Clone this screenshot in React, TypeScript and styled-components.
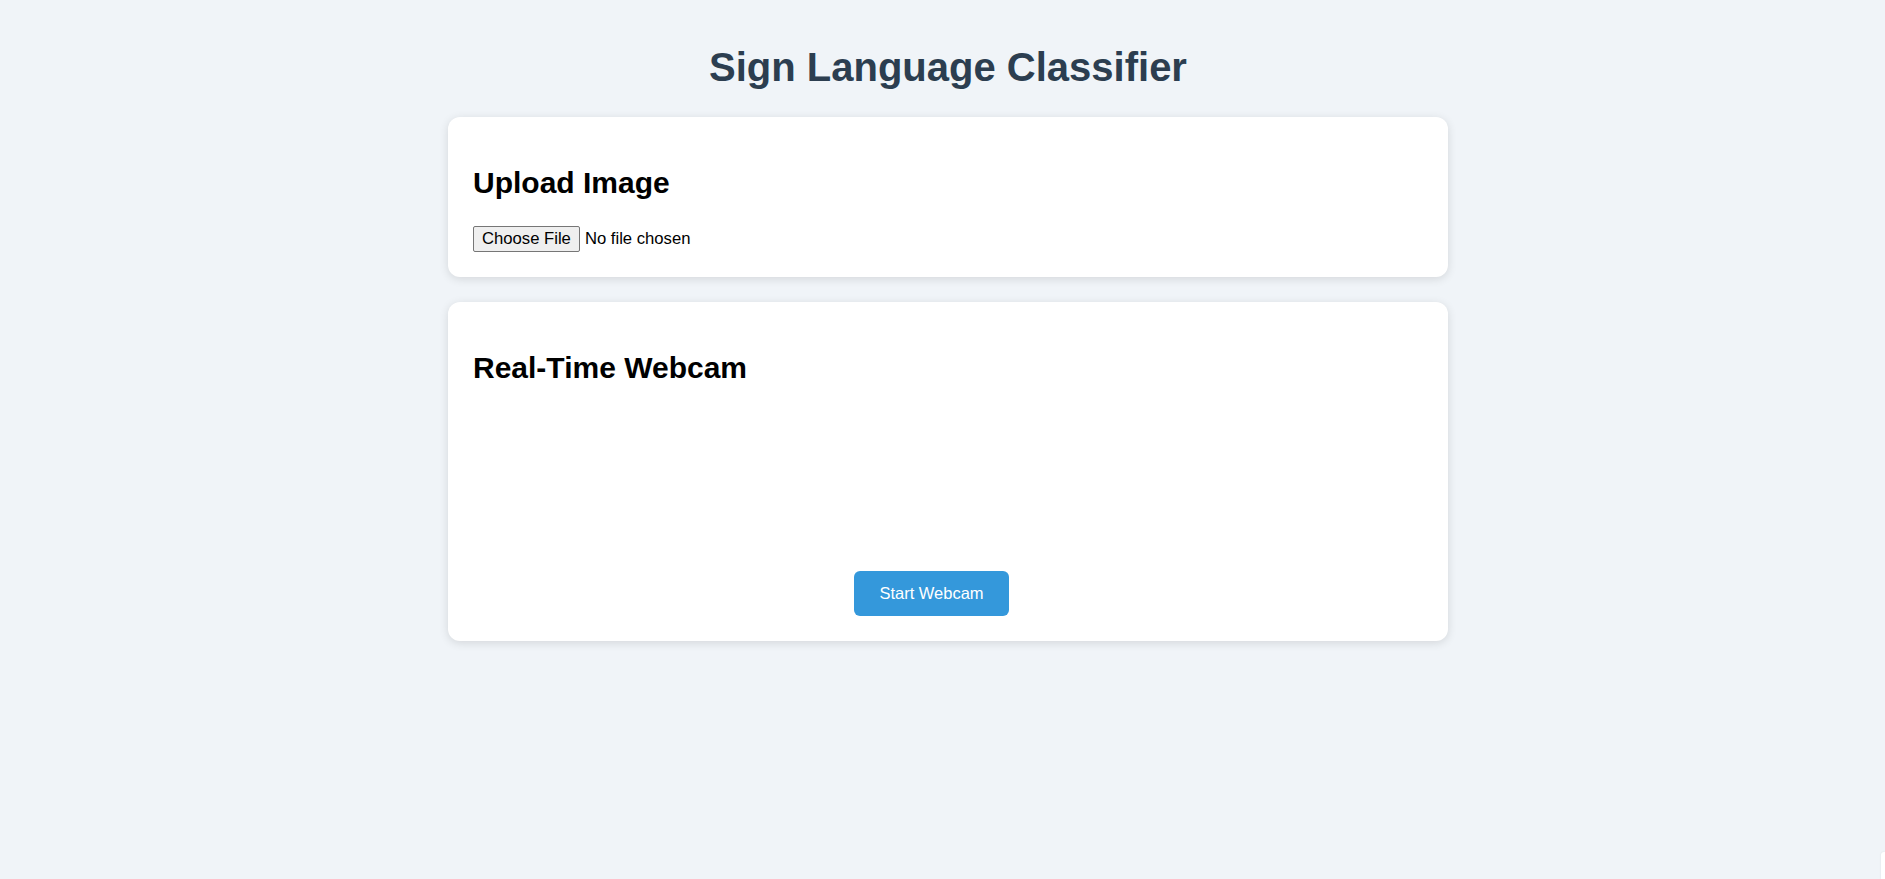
import React from 'react'
import styled, { createGlobalStyle } from 'styled-components'

const GlobalStyle = createGlobalStyle`
  html, body {
    margin: 0;
    padding: 0;
    background: #f0f4f8;
    font-family: 'Liberation Sans', Arial, sans-serif;
    color: #000;
  }
`

const Page = styled.div`
  min-height: 879px;
  box-sizing: border-box;
  padding: 17px 0 0 11px;
`

const Container = styled.main`
  width: 1000px;
  margin: 0 auto;
`

const Title = styled.h1`
  margin: 27px 0;
  font-size: 40px;
  font-weight: 700;
  line-height: 46px;
  text-align: center;
  color: #2c3e50;
`

const Card = styled.section`
  background: #fff;
  border-radius: 12px;
  box-shadow: 0 2px 10px rgba(0, 0, 0, 0.12);
  padding: 24px 25px 25px;
  margin-bottom: 25px;
`

const CardTitle = styled.h2`
  margin: 25px 0 25px;
  font-size: 30px;
  font-weight: 700;
  line-height: 34.5px;
`

const FileInput = styled.input`
  display: block;
  font-family: 'Liberation Sans', Arial, sans-serif;
  font-size: 16.67px;
  height: 26px;

  &::file-selector-button {
    font-family: 'Liberation Sans', Arial, sans-serif;
    font-size: 16.67px;
    background: #efefef;
    border: 1px solid #767676;
    border-radius: 2px;
    padding: 2px 8px;
    margin-right: 5px;
    color: #000;
  }
`

const Stage = styled.div`
  display: flex;
  flex-direction: column;
  align-items: center;
`

const VideoSlot = styled.div`
  width: 100%;
  height: 161px;
`

const PrimaryButton = styled.button`
  background: #3498db;
  color: #fff;
  border: none;
  border-radius: 6px;
  padding: 13px 25px;
  margin-right: 33px;
  font-family: 'Liberation Sans', Arial, sans-serif;
  font-size: 16.5px;
  line-height: 19px;
  cursor: pointer;
`

const CornerTab = styled.div`
  position: fixed;
  right: 0;
  bottom: 0;
  width: 4px;
  height: 27px;
  background: #fff;
  border-top-left-radius: 3px;
  box-shadow: 0 0 2px rgba(0, 0, 0, 0.1);
`

export default function App() {
  return (
    <>
      <GlobalStyle />
      <Page>
        <Container>
          <Title>Sign Language Classifier</Title>
          <Card>
            <CardTitle>Upload Image</CardTitle>
            <FileInput type="file" accept="image/*" />
          </Card>
          <Card>
            <CardTitle>Real-Time Webcam</CardTitle>
            <Stage>
              <VideoSlot />
              <PrimaryButton type="button">Start Webcam</PrimaryButton>
            </Stage>
          </Card>
        </Container>
      </Page>
      <CornerTab />
    </>
  )
}
